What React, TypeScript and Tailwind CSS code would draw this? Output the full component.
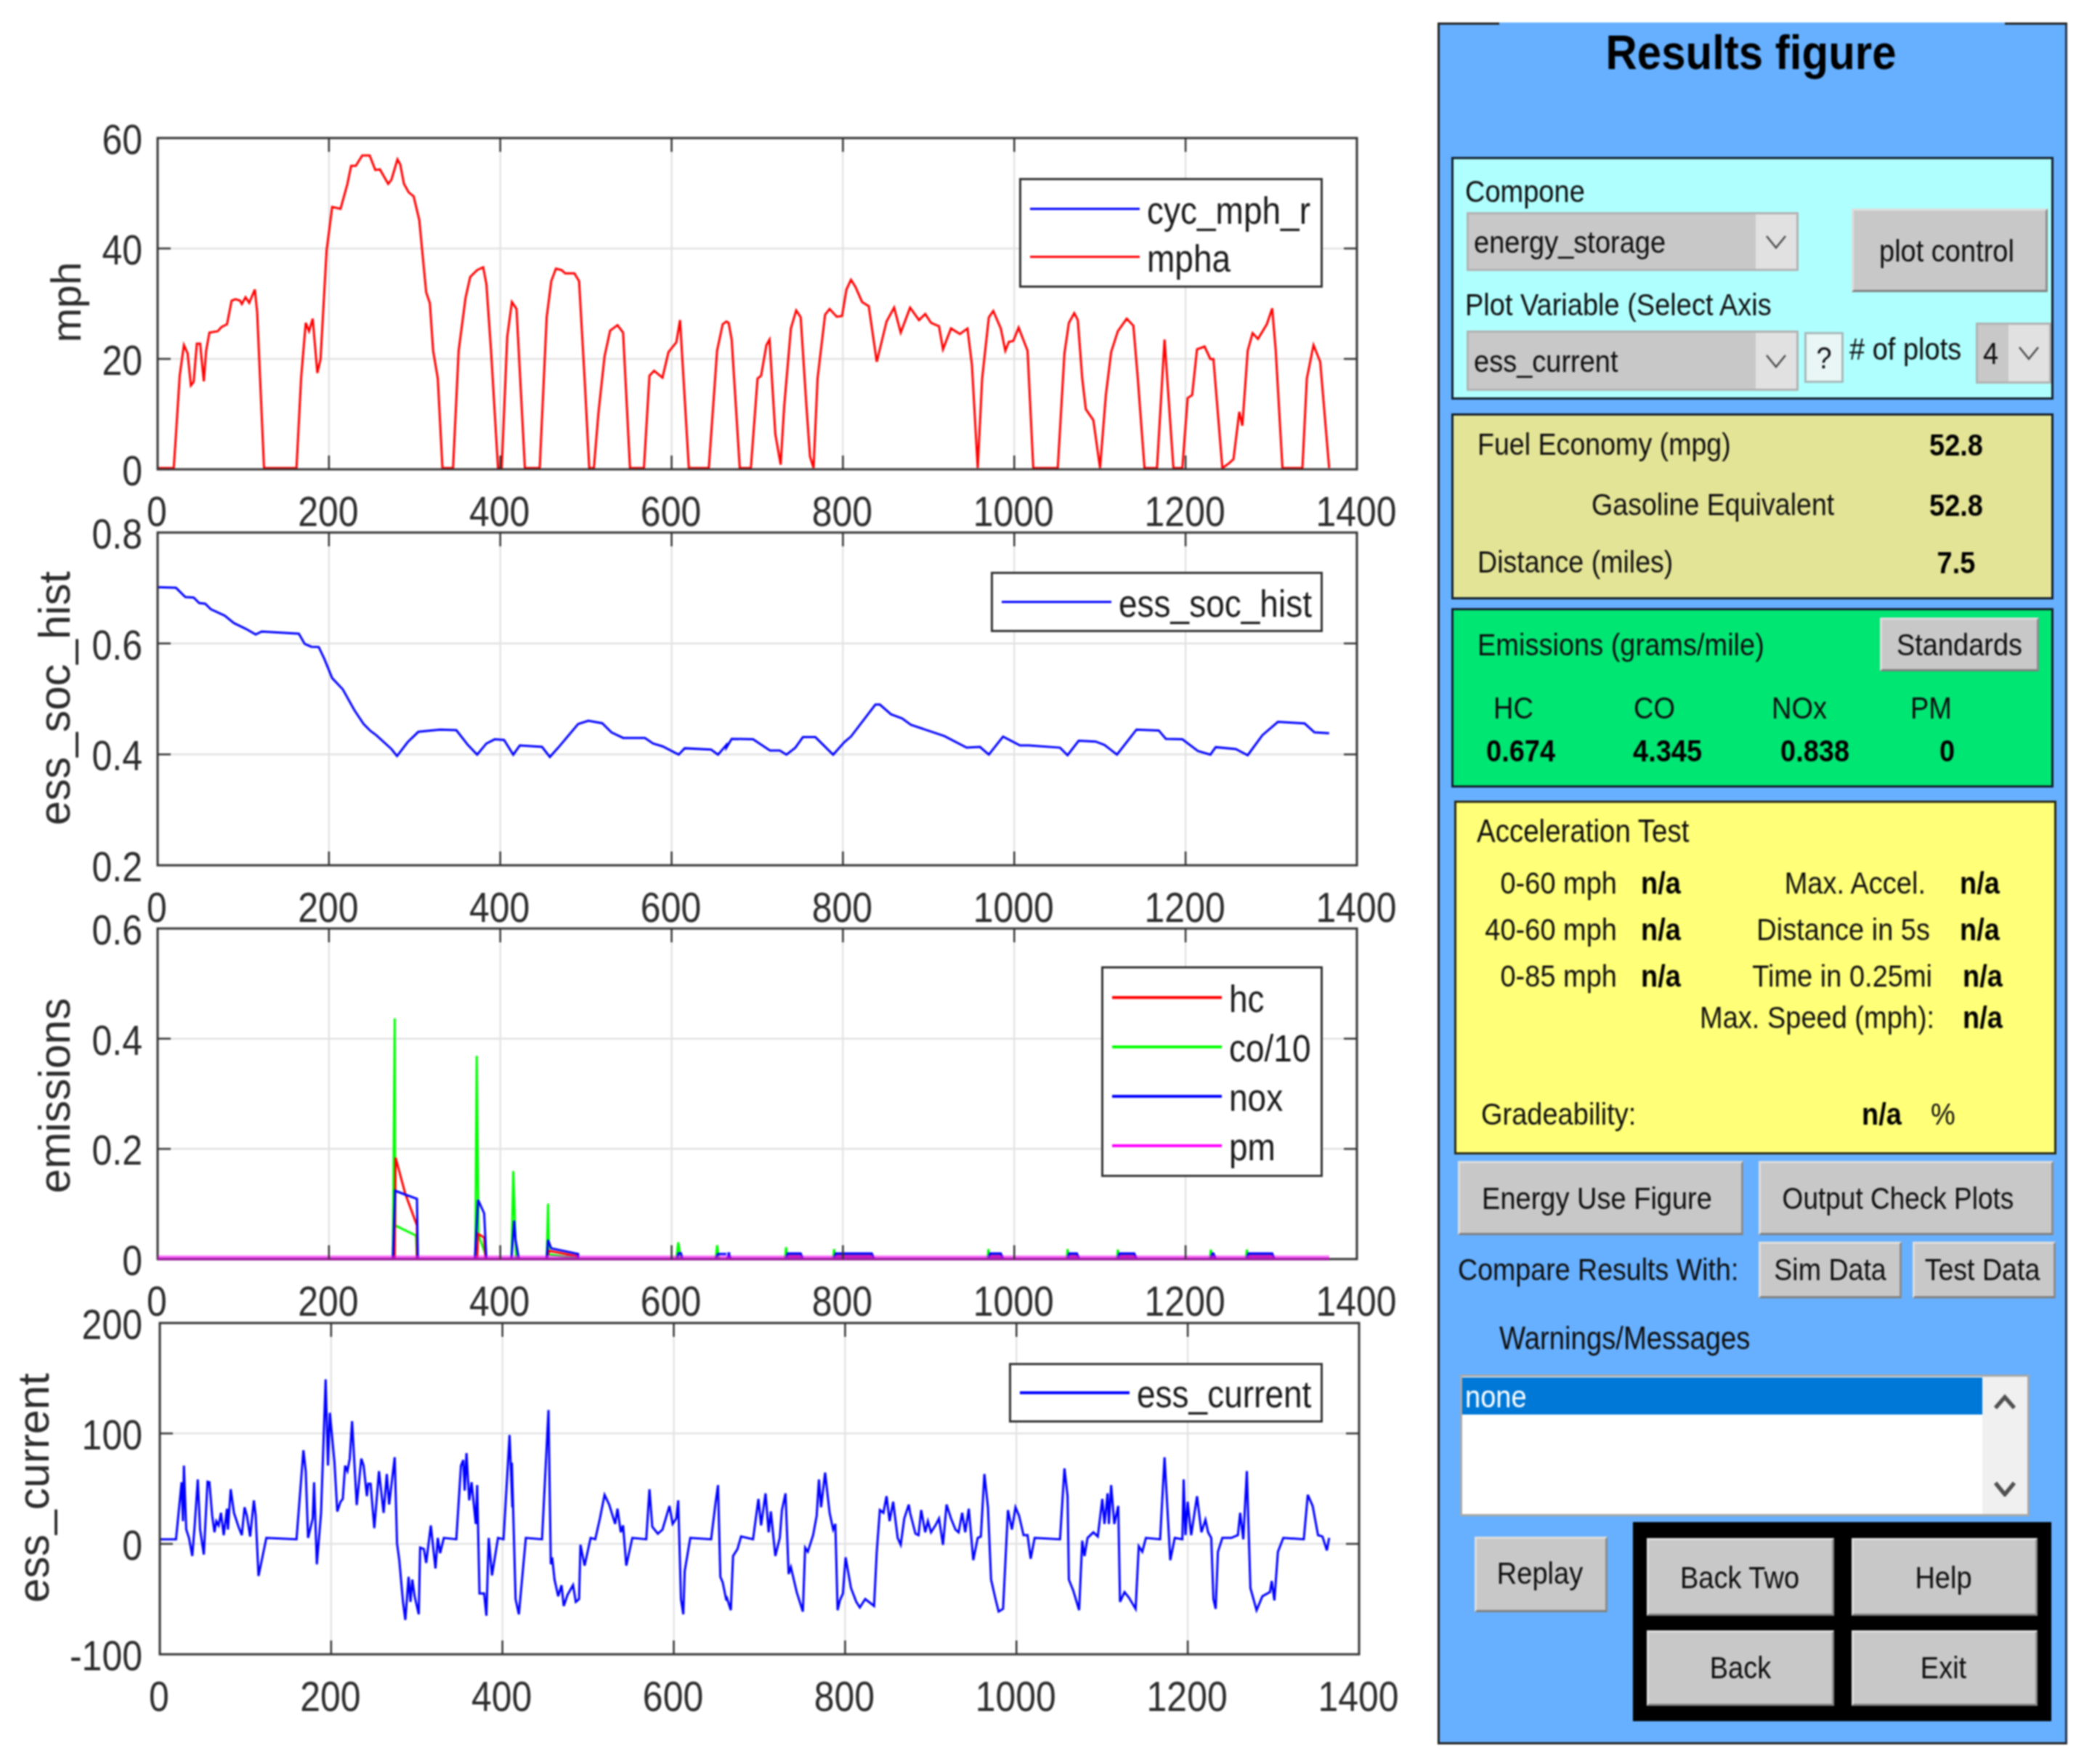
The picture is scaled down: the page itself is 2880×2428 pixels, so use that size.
import { ReactNode } from 'react'
import clsx from 'clsx'

// curves traced off the reference, as [x, y] in crop pixels; toPts maps them back to page pixels
const toPts = (pts: number[][], ox: number, sx: number, oy: number, sy: number) =>
  pts.map(([x, y]) => `${(ox + x / sx).toFixed(1)},${(oy + y / sy).toFixed(1)}`).join(' ')

const MPH_A = [[340,1422],[375,1422],[380,1300],[388,1090],[397,980],[405,1010],[412,1125],[418,1112],[425,975],[432,975],[440,1110],[445,1000],[452,935],[470,930],[478,915],[490,905],[500,820],[508,815],[518,820],[522,832],[530,808],[538,828],[550,780],[555,860],[570,1422],[640,1422],[650,1100],[660,900],[667,930],[675,885],[685,1080],[692,1030],[705,640],[717,483],[735,490],[750,400],[758,335],[768,335],[782,298],[798,298],[810,350],[820,348],[838,400],[845,385],[858,312],[864,330],[872,400],[882,430],[893,445],[905,530],[920,790],[928,830],[935,1000],[945,1100],[955,1422],[978,1422],[990,1000],[1005,810],[1015,735],[1030,710],[1043,700],[1050,760],[1060,1000],[1075,1422],[1083,1422],[1095,950],[1105,825],[1115,850],[1133,1422],[1165,1422],[1180,880],[1190,750],[1200,705],[1212,710],[1220,722],[1240,722],[1250,750],[1262,1100],[1272,1422],[1282,1422],[1292,1220],[1305,1020],[1317,928],[1333,908],[1345,935],[1360,1422],[1390,1422],[1402,1090],[1412,1072],[1430,1097],[1443,1005],[1460,970],[1468,890],[1487,1422],[1530,1422],[1548,1000],[1560,905],[1568,895]]
const MPH_B = [[5,900],[12,960],[30,1422],[55,1422],[70,1100],[78,1090],[90,980],[97,960],[110,1300],[122,1410],[130,1200],[145,920],[157,855],[167,880],[180,1200],[188,1380],[196,1422],[205,1100],[222,870],[232,850],[248,878],[260,875],[270,780],[280,745],[290,770],[305,825],[320,840],[338,1040],[360,895],[377,845],[392,935],[413,845],[433,890],[447,868],[460,900],[478,912],[487,995],[505,920],[525,940],[542,920],[552,1050],[565,1422],[575,1100],[590,880],[600,857],[617,920],[627,1000],[635,968],[645,965],[657,917],[677,1000],[690,1422],[745,1422],[760,1010],[770,900],[782,865],[790,890],[800,1100],[808,1210],[825,1250],[840,1422],[853,1160],[865,1005],[880,930],[900,885],[915,910],[925,1100],[940,1422],[968,1422],[985,960],[1005,1422],[1025,1422],[1037,1170],[1047,1160],[1058,995],[1075,985],[1088,1030],[1095,1030],[1115,1422],[1130,1405],[1140,1390],[1153,1220],[1160,1270],[1172,1000],[1183,937],[1195,958],[1215,905],[1227,848],[1235,1000],[1250,1422],[1295,1422],[1305,1100],[1320,980],[1335,1040],[1355,1422]]

const SOC_A = [[342,283],[380,285],[400,318],[418,320],[430,340],[443,342],[455,362],[485,385],[505,412],[530,432],[552,453],[565,442],[645,450],[658,487],[672,497],[688,498],[700,540],[717,610],[740,650],[765,725],[785,775],[800,800],[812,815],[845,865],[857,890],[880,840],[903,803],[950,795],[985,797],[1010,850],[1030,885],[1050,845],[1068,830],[1088,832],[1108,885],[1122,852],[1170,857],[1187,893],[1205,860],[1248,775],[1270,763],[1300,772],[1320,805],[1345,825],[1392,825],[1410,845],[1430,855],[1465,885],[1478,862],[1535,867],[1550,885],[1568,850]]
const SOC_B = [[0,860],[12,828],[60,830],[98,870],[120,870],[135,885],[155,860],[172,822],[200,822],[240,885],[265,840],[280,820],[335,705],[345,705],[370,740],[395,755],[415,778],[490,818],[540,860],[570,857],[590,885],[622,820],[660,852],[680,852],[750,860],[767,887],[792,835],[830,838],[850,850],[878,885],[922,795],[972,798],[988,828],[1025,830],[1060,872],[1088,885],[1100,858],[1145,865],[1172,887],[1205,815],[1240,767],[1300,773],[1322,805],[1355,808]]

const CUR_A = [[345,885],[380,885],[385,800],[392,680],[395,820],[397,620],[402,850],[408,880],[415,945],[420,840],[427,670],[432,850],[440,940],[448,678],[452,680],[458,800],[463,860],[467,820],[472,835],[477,790],[483,870],[490,775],[492,850],[498,705],[505,790],[515,840],[522,870],[528,770],[533,800],[540,875],[548,745],[552,800],[558,1017],[575,880],[640,885],[655,565],[660,640],[665,880],[675,810],[678,680],[684,975],[693,790],[703,310],[708,620],[712,430],[717,520],[722,610],[728,785],[735,750],[740,740],[745,620],[750,640],[755,595],[760,460],[770,762],[780,595],[785,620],[792,730],[795,685],[800,685],[808,845],[818,640],[828,790],[835,650],[840,760],[852,590],[857,900],[862,960],[870,1110],[875,1175],[882,1020],[886,1110],[890,1030],[895,1090],[904,1155],[907,915],[915,920],[920,970],[930,835],[940,990],[945,880],[950,935],[958,880],[985,885],[995,620],[1000,600],[1003,710],[1007,575],[1013,745],[1018,680],[1027,830],[1030,690],[1035,1080],[1045,1080],[1050,1160],[1055,880],[1062,1015],[1075,880],[1087,885],[1100,510],[1106,770],[1105,610],[1113,1100],[1120,1155],[1135,880],[1170,885],[1184,420],[1189,975],[1192,950],[1197,1030],[1205,1090],[1212,1050],[1217,1125],[1225,1085],[1237,1050],[1243,1110],[1250,1100],[1253,905],[1262,980],[1275,880],[1285,885],[1295,810],[1305,725],[1315,760],[1328,830],[1333,775],[1340,860],[1345,835],[1352,980],[1365,880],[1395,885],[1402,705],[1408,840],[1420,865],[1430,850],[1445,765],[1452,830],[1460,810],[1464,745],[1470,1100],[1475,1155],[1478,1000],[1490,880],[1535,885],[1545,750],[1550,690],[1555,1020],[1560,1040],[1568,1105]]
const CUR_B = [[0,1090],[10,1140],[15,945],[25,920],[33,875],[60,885],[72,740],[78,835],[88,720],[95,860],[100,785],[110,945],[120,880],[125,780],[133,720],[140,1010],[145,985],[158,1075],[172,1145],[177,915],[183,930],[195,870],[203,800],[208,670],[213,770],[222,645],[232,790],[240,850],[245,830],[250,1140],[255,1105],[262,1080],[268,950],[280,1060],[292,1110],[300,1130],[312,1100],[320,1110],[332,1125],[338,930],[345,780],[353,790],[360,730],[367,820],[375,750],[385,880],[392,905],[400,810],[410,760],[413,790],[425,865],[432,870],[438,780],[447,860],[453,820],[460,860],[470,835],[478,810],[487,905],[495,760],[505,810],[515,850],[522,860],[530,790],[537,860],[545,775],[555,960],[565,880],[572,875],[580,650],[588,770],[595,1030],[605,1100],[612,1145],[622,1135],[633,780],[642,850],[650,770],[658,800],[668,870],[677,870],[684,955],[693,880],[750,885],[760,630],[767,730],[770,1030],[780,1070],[793,1140],[800,890],[805,945],[812,880],[825,860],[835,875],[845,740],[850,830],[857,720],[860,830],[865,690],[872,830],[881,765],[885,1110],[895,1075],[905,1095],[920,1135],[927,910],[935,930],[943,880],[975,885],[985,590],[998,960],[1008,880],[1025,885],[1028,670],[1032,870],[1037,750],[1045,870],[1058,730],[1068,860],[1077,815],[1083,860],[1090,880],[1095,1100],[1100,1135],[1105,930],[1115,880],[1135,880],[1150,870],[1155,790],[1162,885],[1170,640],[1178,1060],[1192,1140],[1205,1090],[1222,1075],[1226,1035],[1232,1105],[1240,930],[1252,880],[1298,885],[1307,725],[1318,765],[1330,870],[1340,875],[1350,925],[1355,880]]

const GREEN_SPIKES = [[[848,1418],[852,425],[853,1280],[898,1322],[900,1418]],[[1026,1418],[1029,580],[1033,1320],[1048,1400]],[[1104,1418],[1108,1055],[1114,1418]],[[1180,1418],[1183,1190],[1185,1400],[1248,1415]],[[1460,1418],[1464,1350],[1470,1418]],[[1545,1418],[1548,1362],[1552,1418]]]
const RED_SPIKES = [[[852,1418],[854,1000],[875,1150],[900,1280],[900,1418]],[[1030,1418],[1032,1315],[1045,1330],[1048,1418]],[[1180,1418],[1185,1385],[1248,1408]]]
const BLUE_SPIKES = [[[848,1418],[853,1137],[878,1155],[900,1170],[902,1418]],[[1025,1418],[1032,1175],[1045,1230],[1050,1418]],[[1104,1418],[1110,1260],[1113,1340],[1120,1418]],[[1180,1418],[1183,1340],[1190,1375],[1248,1398],[1248,1418]],[[1462,1418],[1465,1395],[1470,1395],[1473,1418]],[[1545,1418],[1550,1398],[1568,1398]]]
// small bursts on the right half of the emissions plot: start, end, spike top
const BURSTS = [[0,10,0],[132,172,1370],[240,332,1378],[587,622,1378],[765,793,1378],[878,922,1380],[1087,1100,1380],[1168,1232,1380]]

type Box = { l: number; r: number; t: number; b: number }

function Plot({ box, top, height, wrap, yTicks, yLabel, children, over, legend }: {
  box: Box; top: number; height: number; wrap: string
  yTicks: string[]; yLabel: { text: string; x: number; y: number; size: number }
  children: ReactNode; over?: ReactNode; legend: ReactNode
}) {
  const xs = [0, 200, 400, 600, 800, 1000, 1200, 1400]
  const xAt = (v: number) => box.l + (v / 1400) * (box.r - box.l)
  const yAt = (i: number) => box.t + (i / (yTicks.length - 1)) * (box.b - box.t)
  return (
    <div className={clsx('relative w-[1960px]', wrap)}>
      <svg width="1960" height={height} viewBox={`0 ${top} 1960 ${height}`} className="block overflow-visible">
        {xs.slice(1, -1).map(v => <line key={v} x1={xAt(v)} x2={xAt(v)} y1={box.t} y2={box.b} stroke="#dedede" strokeWidth="2" />)}
        {yTicks.slice(1, -1).map((_, i) => <line key={i} x1={box.l} x2={box.r} y1={yAt(i + 1)} y2={yAt(i + 1)} stroke="#e2e2e2" strokeWidth="2.5" />)}
        {children}
        <rect x={box.l} y={box.t} width={box.r - box.l} height={box.b - box.t} fill="none" stroke="#333" strokeWidth="3" />
        {over}
        {xs.slice(1, -1).map(v => (
          <g key={v} stroke="#333" strokeWidth="2.5">
            <line x1={xAt(v)} x2={xAt(v)} y1={box.t} y2={box.t + 19} />
            <line x1={xAt(v)} x2={xAt(v)} y1={box.b} y2={box.b - 19} />
          </g>
        ))}
        {yTicks.slice(1, -1).map((_, i) => (
          <g key={i} stroke="#333" strokeWidth="2.5">
            <line x1={box.l} x2={box.l + 18} y1={yAt(i + 1)} y2={yAt(i + 1)} />
            <line x1={box.r} x2={box.r - 18} y1={yAt(i + 1)} y2={yAt(i + 1)} />
          </g>
        ))}
        {xs.map(v => (
          <text key={v} transform={`translate(${xAt(v) - 1} ${box.b + 78}) scale(1 1.14)`} textAnchor="middle" fontSize="50" fill="#2c2c2c">{v}</text>
        ))}
        {yTicks.map((t, i) => (
          <text key={t} transform={`translate(196 ${yAt(i) + 22}) scale(1 1.14)`} textAnchor="end" fontSize="50" fill="#2c2c2c">{t}</text>
        ))}
        <text transform={`translate(${yLabel.x} ${yLabel.y}) rotate(-90)`} textAnchor="middle" fontSize={yLabel.size} fill="#2c2c2c">{yLabel.text}</text>
      </svg>
      {legend}
    </div>
  )
}

function Legend({ place, row, items }: { place: string; row: string; items: { name: string; line: string }[] }) {
  return (
    <div className={clsx('absolute flex flex-col justify-center bg-white border-[3px] border-[#333]', place)}>
      {items.map(it => (
        <div key={it.name} className={clsx('flex items-center pl-[12px] gap-[10px]', row)}>
          <div className={clsx('w-[151px] h-[3.5px] shrink-0', it.line)} />
          <span className="inline-block text-[46px] leading-none scale-y-[1.14] translate-y-[2px] whitespace-nowrap text-[#1a1a1a]">{it.name}</span>
        </div>
      ))}
    </div>
  )
}

function Label({ children, bold, size, className }: { children: ReactNode; bold?: boolean; size?: string; className?: string }) {
  return (
    <span className={clsx('inline-block leading-none scale-y-[1.14] whitespace-nowrap', size || 'text-[38px]', bold ? 'font-bold text-black' : 'text-[#0e0e0e]', className)}>
      {children}
    </span>
  )
}

function Btn({ children, className, size }: { children: ReactNode; className?: string; size?: string }) {
  return (
    <div className={clsx('flex items-center justify-center shrink-0 bg-[#c8c8c8] border-[3px] border-t-[#dedede] border-l-[#dedede] border-r-[#8c8c8c] border-b-[#808080]', className)}>
      <Label size={size}>{children}</Label>
    </div>
  )
}

function Chevron({ up, thick }: { up?: boolean; thick?: boolean }) {
  return (
    <svg width="30" height="22" viewBox="0 0 30 22" className="block">
      <polyline
        points={up ? '2,19 15,4 28,19' : '2,3 15,19 28,3'}
        fill="none"
        stroke={thick ? '#505050' : '#4a4a4a'}
        strokeWidth={thick ? 5.5 : 2.5}
      />
    </svg>
  )
}

function Dropdown({ value, className, textW }: { value: string; className: string; textW?: string }) {
  return (
    <div className={clsx('flex shrink-0 bg-[#c8c8c8] border-[3px] border-[#b2b2b2]', className)}>
      <div className={clsx('flex items-center pl-[7px]', textW || 'flex-1')}><Label>{value}</Label></div>
      <div className="ml-auto flex items-center justify-center w-[56px] bg-[#e1e1e1]"><Chevron /></div>
    </div>
  )
}

function AccRow({ label, w, gap, rowH }: { label: string; w: string; gap: string; rowH?: string }) {
  return (
    <div className={clsx('flex items-center', rowH || 'h-[64px]')}>
      <div className={clsx('text-right shrink-0', w, gap)}><Label>{label}</Label></div>
      <Label bold>n/a</Label>
    </div>
  )
}

export default function App() {
  return (
    <div className="flex w-[2880px] h-[2428px] bg-white font-['Liberation_Sans',Arial,sans-serif] blur-[1px]">
      <div className="w-[1960px] shrink-0 flex flex-col">
        <Plot
          box={{ l: 217, r: 1868, t: 190, b: 646 }} top={0} height={730} wrap="h-[730px]"
          yTicks={['60', '40', '20', '0']} yLabel={{ text: 'mph', x: 111, y: 416, size: 57 }}
          legend={<Legend place="left-[1403px] top-[245px] w-[418px] h-[151px]" row="h-[66px]" items={[
            { name: 'cyc_mph_r', line: 'bg-[#0000ff]' }, { name: 'mpha', line: 'bg-[#ff0000]' },
          ]} />}
        >
          <polyline points={toPts(MPH_A, 0, 1.568, 100, 2.613) + ' ' + toPts(MPH_B, 1000, 1.633, 100, 2.613)} fill="none" stroke="#ff0000" strokeWidth="3" />
        </Plot>
        <Plot
          box={{ l: 217, r: 1868, t: 733, b: 1191 }} top={730} height={545} wrap="h-[545px]"
          yTicks={['0.8', '0.6', '0.4', '0.2']} yLabel={{ text: 'ess_soc_hist', x: 96, y: 961, size: 60.5 }}
          legend={<Legend place="left-[1364px] top-[57px] w-[457px] h-[83px]" row="h-[65px]" items={[
            { name: 'ess_soc_hist', line: 'bg-[#0000ff]' },
          ]} />}
        >
          <polyline points={toPts(SOC_A, 0, 1.568, 700, 2.613) + ' ' + toPts(SOC_B, 1000, 1.633, 700, 2.613)} fill="none" stroke="#0000ff" strokeWidth="3" />
        </Plot>
        <Plot
          box={{ l: 217, r: 1868, t: 1278, b: 1733 }} top={1275} height={543} wrap="h-[543px]"
          yTicks={['0.6', '0.4', '0.2', '0']} yLabel={{ text: 'emissions', x: 96, y: 1508, size: 60.5 }}
          legend={<Legend place="left-[1516px] top-[55px] w-[305px] h-[290px]" row="h-[68px]" items={[
            { name: 'hc', line: 'bg-[#ff0000]' }, { name: 'co/10', line: 'bg-[#00ff00]' },
            { name: 'nox', line: 'bg-[#0000ff]' }, { name: 'pm', line: 'bg-[#ff00ff]' },
          ]} />}
          over={
            <>
              <line x1="217" x2="1830" y1="1731" y2="1731" stroke="#ff00ff" strokeOpacity="0.55" strokeWidth="6" />
              <line x1="217" x2="1830" y1="1733" y2="1733" stroke="#a21fa2" strokeWidth="3.5" />
            </>
          }
        >
          {GREEN_SPIKES.map((s, i) => <polyline key={i} points={toPts(s, 0, 1.568, 1260, 3)} fill="none" stroke="#00ff00" strokeWidth="3" />)}
          {RED_SPIKES.map((s, i) => <polyline key={i} points={toPts(s, 0, 1.568, 1260, 3)} fill="none" stroke="#ff0000" strokeWidth="3" />)}
          {BLUE_SPIKES.map((s, i) => <polyline key={i} points={toPts(s, 0, 1.568, 1260, 3)} fill="none" stroke="#0000ff" strokeWidth="3" />)}
          {BURSTS.map(([a, b, top], i) => (
            <g key={i}>
              {top > 0 && <polyline points={toPts([[a, 1418], [a + 2, top], [a + 5, 1418]], 1000, 1.633, 1260, 3)} fill="none" stroke="#00ff00" strokeWidth="3" />}
              <polyline points={toPts([[a + 2, 1418], [a + 6, 1396], [b - 5, 1396], [b, 1418]], 1000, 1.633, 1260, 3)} fill="#5050d0" stroke="#0000ff" strokeWidth="3" />
              <line x1={1000 + (a + 6) / 1.633} x2={1000 + (b - 4) / 1.633} y1="1729" y2="1729" stroke="#c02060" strokeWidth="2.5" />
            </g>
          ))}
        </Plot>
        <Plot
          box={{ l: 220, r: 1871, t: 1821, b: 2277 }} top={1818} height={610} wrap="h-[610px]"
          yTicks={['200', '100', '0', '-100']} yLabel={{ text: 'ess_current', x: 67, y: 2048, size: 60.5 }}
          legend={<Legend place="left-[1389px] top-[58px] w-[432px] h-[82px]" row="h-[65px]" items={[
            { name: 'ess_current', line: 'bg-[#0000ff]' },
          ]} />}
        >
          <polyline points={toPts(CUR_A, 0, 1.568, 1780, 2.613) + ' ' + toPts(CUR_B, 1000, 1.633, 1780, 2.613)} fill="none" stroke="#0000ff" strokeWidth="3" />
        </Plot>
      </div>

      <div className="relative ml-[19px] mt-[31px] w-[867px] h-[2370px] shrink-0 bg-[#66b0ff] border-l-[3px] border-r-[3px] border-b-[3px] border-l-[#222] border-r-[#26344a] border-b-[#222]">
        <div className="absolute -left-[3px] top-0 w-[85px] h-[3px] bg-[#222]" />
        <div className="absolute -right-[3px] top-0 w-[86px] h-[3px] bg-[#222]" />

        <div className="flex justify-center h-[185px] pt-[12px] pr-[4px]">
          <span className="inline-block h-fit text-[60px] leading-none font-bold scale-y-[1.12] text-black whitespace-nowrap">Results figure</span>
        </div>

        {/* component / plot selection */}
        <div className="ml-[16px] w-[829px] h-[334px] bg-[#b0ffff] border-[3px] border-[#14202c]">
          <div className="flex h-[183px]">
            <div className="ml-[18px] w-[457px]">
              <div className="flex items-center h-[73px] pt-[14px] -ml-[2px]"><Label>Compone</Label></div>
              <Dropdown value="energy_storage" className="w-[457px] h-[81px]" />
            </div>
            <Btn className="ml-[73px] mt-[68px] w-[270px] h-[115px] pr-[8px]">plot control</Btn>
          </div>
          <div className="flex items-center h-[42px] pb-[8px] ml-[16px]"><Label>Plot Variable (Select Axis</Label></div>
          <div className="flex">
            <Dropdown value="ess_current" className="ml-[18px] mt-[11px] w-[457px] h-[83px]" />
            <div className="flex items-center justify-center ml-[8px] mt-[13px] w-[54px] h-[70px] bg-[#eaf6f6] border-[3px] border-[#a8b8b8] shrink-0"><Label>?</Label></div>
            <div className="flex items-center ml-[8px] mt-[18px] w-[174px] h-[36px] shrink-0"><Label># of plots</Label></div>
            <Dropdown value="4" textW="w-[42px]" className="w-[104px] h-[84px]" />
          </div>
        </div>

        {/* fuel economy */}
        <div className="ml-[16px] mt-[19px] w-[829px] h-[256px] bg-[#e4e496] border-[3px] border-[#14202c]">
          <div className="grid grid-cols-[632px_120px] items-center h-[80px]">
            <div className="pl-[33px]"><Label size="text-[37.6px]">Fuel Economy (mpg)</Label></div>
            <div className="text-center"><Label bold>52.8</Label></div>
          </div>
          <div className="grid grid-cols-[632px_120px] items-center h-[86px]">
            <div className="pl-[190px]"><Label size="text-[37.6px]">Gasoline Equivalent</Label></div>
            <div className="text-center"><Label bold>52.8</Label></div>
          </div>
          <div className="grid grid-cols-[632px_120px] items-center h-[72px]">
            <div className="pl-[33px]"><Label size="text-[37.6px]">Distance (miles)</Label></div>
            <div className="text-center"><Label bold>7.5</Label></div>
          </div>
        </div>

        {/* emissions */}
        <div className="ml-[16px] mt-[12px] w-[829px] h-[247px] bg-[#00e673] border-[3px] border-[#14202c]">
          <div className="flex items-center h-[94px] pl-[33px] pr-[17px]">
            <Label>Emissions (grams/mile)</Label>
            <Btn className="ml-auto w-[219px] h-[74px]">Standards</Btn>
          </div>
          <div className="grid grid-cols-[193px_190px_191px_1fr] items-center h-[80px] pl-[55px]">
            {['HC', 'CO', 'NOx', 'PM'].map(h => <div key={h}><Label>{h}</Label></div>)}
          </div>
          <div className="grid grid-cols-[202px_203px_219px_1fr] items-center h-[38px] pl-[45px]">
            {['0.674', '4.345', '0.838', '0'].map(v => <div key={v}><Label bold>{v}</Label></div>)}
          </div>
        </div>

        {/* acceleration test */}
        <div className="ml-[20px] mt-[18px] w-[829px] h-[487px] bg-[#ffff78] border-[3px] border-[#2a2a14]">
          <div className="flex items-center h-[78px] pl-[28px]"><Label size="text-[38.5px]">Acceleration Test</Label></div>
          <div className="flex h-[242px]">
            <div className="w-[335px] shrink-0">
              <AccRow label="0-60 mph" w="w-[221px]" gap="mr-[33px]" />
              <AccRow label="40-60 mph" w="w-[221px]" gap="mr-[33px]" />
              <AccRow label="0-85 mph" w="w-[221px]" gap="mr-[33px]" />
            </div>
            <div>
              <AccRow label="Max. Accel." w="w-[311px]" gap="mr-[47px]" />
              <AccRow label="Distance in 5s" w="w-[317px]" gap="mr-[41px]" />
              <AccRow label="Time in 0.25mi" w="w-[320px]" gap="mr-[42px]" />
              <AccRow label="Max. Speed (mph):" w="w-[323px]" gap="mr-[39px]" rowH="h-[50px]" />
            </div>
          </div>
          <div className="flex items-center h-[50px] mt-[83px] pl-[34px]">
            <div className="w-[524px] shrink-0"><Label>Gradeability:</Label></div>
            <div className="w-[95px] shrink-0"><Label bold>n/a</Label></div>
            <Label>%</Label>
          </div>
        </div>

        <div className="flex ml-[25px] mt-[9px]">
          <Btn className="w-[393px] h-[102px] pr-[10px]">Energy Use Figure</Btn>
          <Btn size="text-[37px]" className="ml-[21px] w-[406px] h-[102px] pr-[22px]">Output Check Plots</Btn>
        </div>

        <div className="flex items-center ml-[25px] mt-[9px]">
          <div className="w-[414px] shrink-0"><Label size="text-[37.6px]">Compare Results With:</Label></div>
          <Btn size="text-[37.6px]" className="w-[197px] h-[78px]">Sim Data</Btn>
          <Btn size="text-[37.6px]" className="ml-[15px] w-[197px] h-[78px] pr-[5px]">Test Data</Btn>
        </div>

        <div className="flex items-center h-[105px] pt-[5px] pl-[82px]"><Label size="text-[38.3px]">Warnings/Messages</Label></div>

        <div className="flex ml-[28px] w-[784px] h-[195px] bg-white border-[3px] border-[#a8a8a8]">
          <div className="flex-1 pt-[1px]">
            <div className="flex items-center h-[51px] pl-[4px] bg-[#0078d7]"><Label className="!text-white">none</Label></div>
          </div>
          <div className="flex flex-col items-center justify-between w-[62px] py-[24px] bg-[#f0f0f0]">
            <Chevron up thick />
            <Chevron thick />
          </div>
        </div>

        <div className="flex mt-[8px]">
          <Btn className="ml-[48px] mt-[20px] w-[183px] h-[104px] pb-[5px] pr-[3px]">Replay</Btn>
          <div className="ml-[35px] w-[576px] h-[274px] bg-black pl-[19px] pt-[22px]">
            <div className="grid grid-cols-[258px_256px] grid-rows-[107px_104px] gap-x-[24px] gap-y-[20px]">
              <Btn className="pr-[2px]">Back Two</Btn>
              <Btn className="pr-[3px]">Help</Btn>
              <Btn className="pb-[2px]">Back</Btn>
              <Btn className="pr-[3px] pb-[2px]">Exit</Btn>
            </div>
          </div>
        </div>
      </div>
    </div>
  )
}
